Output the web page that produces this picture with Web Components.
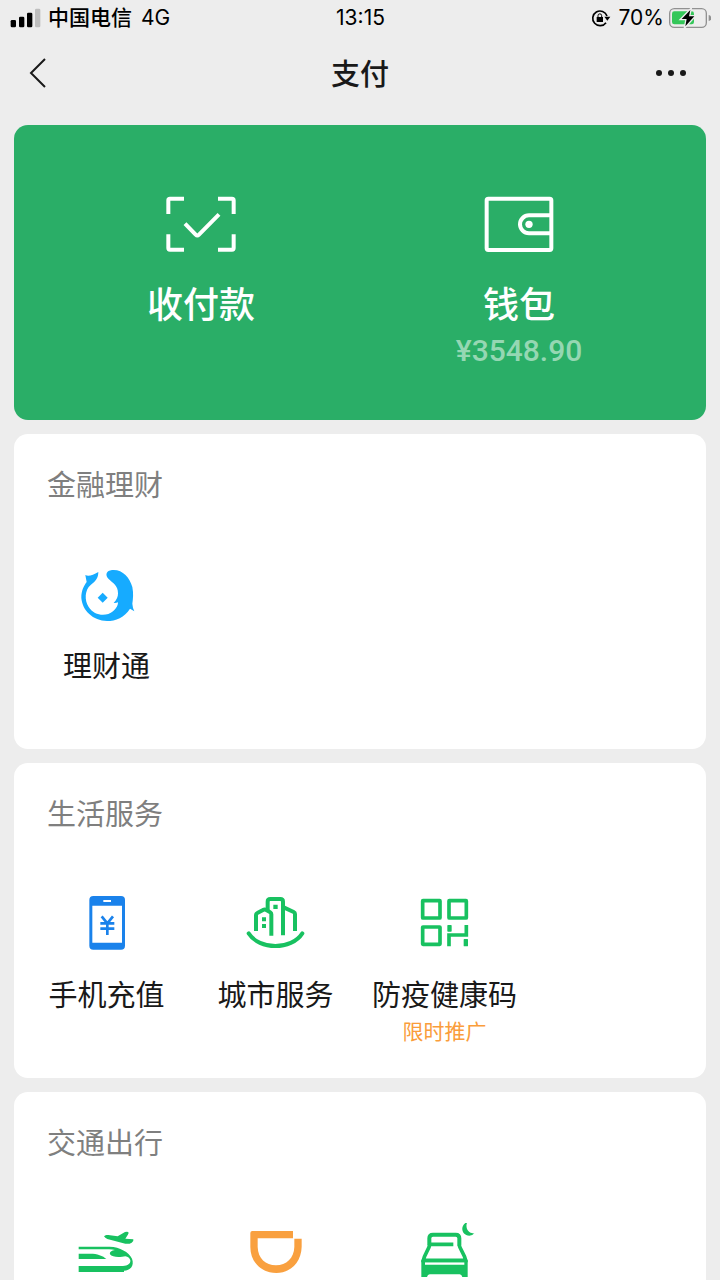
<!DOCTYPE html>
<html lang="zh-CN">
<head>
<meta charset="utf-8">
<meta name="viewport" content="width=device-width, initial-scale=1">
<title>支付</title>
<style>
  html, body { margin: 0; height: 100%; }
  body {
    background: #ededed;
    color: #191919;
    font-family: Inter, "Noto Sans CJK SC", sans-serif;
  }
</style>
</head>
<body>
<pay-page></pay-page>

<script>
const ICONS = {
  scan: `<svg viewBox="105 42 216 180" fill="none" stroke="#fff" stroke-width="12">
    <path d="M115 102V61q0-5 5-5H162M264 56h42q5 0 5 5v41M311 163v41q0 5-5 5H264M162 209H120q-5 0-5-5V163"/>
    <path d="M165 131l32 33q5 5 10 0L267 103" stroke-width="12"/></svg>`,
  wallet: `<svg viewBox="129 42 216 180" fill="none" stroke="#fff" stroke-width="12">
    <rect x="140" y="56" width="194" height="154" rx="5"/>
    <path d="M334 106H267a27 27 0 0 0 0 54H334" stroke-width="12"/>
    <circle cx="267" cy="133" r="11" fill="#fff" stroke="none"/></svg>`,
  fund: `<svg viewBox="110 45 180 180" fill="#16abff">
    <path d="M135 75C144 81 158 75 174 66C174 84 166 93 151 105C133 120 132 151 145 171C162 198 198 201 218 184C230 174 233 164 233 157Q227 160 220 159C230 149 233 140 233 130C233 106 218 100 205 87C193 75 198 62 215 60C245 57 268 81 276 111C280 130 278 148 276 161Q277 174 282 184L269 176C253 202 226 213 200 213C158 212 126 182 123 144C123 122 130 108 139 96Q137 86 135 75Z"/>
    <path d="M187 128l15 15-15 15-15-15z"/></svg>`,
  phone: `<svg viewBox="20 42 180 180">
    <rect x="57" y="48" width="107" height="161" rx="12" fill="#1a82eb"/>
    <path fill="#fff" d="M66 77h89v111H66zM99 60h23v6H99z"/>
    <path d="M94 109l17 21 17-21M90 130h42M90 146h42M111 130v35" fill="none" stroke="#1a82eb" stroke-width="8"/></svg>`,
  city: `<svg viewBox="33 42 180 180" fill="none" stroke="#18c160" stroke-width="12">
    <path d="M63 153V105q0-4 4-6l17-9q5-3 10 0l12 7q3 2 3 6V167"/>
    <path d="M98 91V65q0-8 8-8h30q8 0 8 8V166M146 82l30 14q4 2 4 6V153"/>
    <path d="M41 160C73 211 169 211 202 160" stroke-linecap="round"/>
    <path d="M115 74h13v13h-13zM81 112h12v12H81zM81 132h12v12H81z" fill="#18c160" stroke="none"/></svg>`,
  qr: `<svg viewBox="45 42 180 180" fill="none" stroke="#18c160" stroke-width="11">
    <rect x="68" y="62" width="52" height="52" rx="1"/><rect x="147" y="62" width="52" height="52" rx="1"/>
    <rect x="68" y="141" width="52" height="52" rx="1"/>
    <path d="M199 135v30H147v34"/>
    <path d="M142 137q0-2 2-2h9q2 0 2 2v16q0 2-2 2h-9q-2 0-2-2zM191 179q0-2 2-2h9q2 0 2 2v18q0 2-2 2h-9q-2 0-2-2z" fill="#18c160" stroke="none"/></svg>`,
  travel: `<svg viewBox="52 39 180 180" fill="#18c160">
    <path d="M57 110H150C181 111 207 126 217 146C225 168 211 181 193 182V186H57V168H190C204 167 213 162 212 151C210 144 205 140 197 139C182 142 157 143 151 133C149 126 156 121 166 120Q158 118 148 118H57Z"/>
    <path d="M57 131H92C112 131 130 137 140 147H57Z"/>
    <path d="M133 79C138 74 145 74 151 76L174 79L196 66Q206 63 207 69Q205 75 197 86L221 88Q223 94 216 98Q208 103 197 101L143 87Q136 84 133 79Z"/></svg>`,
  ride: `<svg viewBox="33 39 180 180" fill="#f9a03f">
    <path d="M52 63H174V85H68V111C69 145 92 166 123 166C154 166 177 144 178 111V86H200V110C199 155 168 189 124 189C79 189 46 156 46 111V69Q46 63 52 63Z"/></svg>`,
  hotel: `<svg viewBox="30 39 180 180" fill="none" stroke="#18c160" stroke-width="12">
    <path d="M73 106V85q0-11 11-11h68q11 0 11 11v21"/>
    <path d="M73 103H145M75 102C71 121 58 133 55 151H182C179 133 166 121 162 104" stroke-width="11"/>
    <path d="M49 149H188V201H172Q170 193 164 193H74Q68 193 66 201H49ZM60 157V164H178V157Z" fill="#18c160" fill-rule="evenodd" stroke="none"/>
    <path d="M187 36C164 44 168 77 193 77Q203 77 208 70C190 72 179 53 187 36Z" fill="#18c160" stroke="none"/></svg>`
};

const define = (name, markup, fill) => {
  const template = document.createElement('template');
  template.innerHTML = markup;
  customElements.define(name, class extends HTMLElement {
    connectedCallback() {
      if (this.shadowRoot) return;
      const root = this.attachShadow({ mode: 'open' });
      root.append(template.content.cloneNode(true));
      if (fill) fill(this, root);
    }
  });
};

define('status-bar', `
  <style>
    :host { display: grid; grid-template-columns: 1fr auto 1fr; align-items: center; height: 35px;
      padding: 0 9px 0 10px; color: #000; font-size: 21px; line-height: 28px; font-weight: 500; }
    svg { display: block; flex: none; }
    .left, .right { display: flex; align-items: center; }
    .left { gap: 6px; }
    .net { margin-left: 3px; font-weight: 400; }
    .right { justify-content: flex-end; gap: 5px; font-weight: 400; }
    time { font-weight: 400; }
    .lock { margin-right: 3px; }
  </style>
  <div class="left">
    <svg width="32" height="20" viewBox="30 21 96 60" role="img" aria-label="信号">
      <rect x="32" y="57" width="16" height="22" rx="4"/><rect x="57" y="47" width="16" height="32" rx="4"/>
      <rect x="81" y="35" width="16" height="44" rx="4"/><rect x="105" y="23" width="16" height="56" rx="4" fill="#bebebe"/>
    </svg>
    <span>中国电信</span><span class="net">4G</span>
  </div>
  <time>13:15</time>
  <div class="right">
    <svg class="lock" width="20" height="20" viewBox="102 21 60 60" role="img" aria-label="方向锁定">
      <path d="M147 65A22 22 0 1 1 150 45" fill="none" stroke="#000" stroke-width="5"/>
      <path d="M142 47h18l-9 12zM119 48h19v15h-19z"/>
      <path d="M123 49v-5a5 5 0 0 1 11 0v5" fill="none" stroke="#000" stroke-width="3"/>
    </svg>
    <span>70%</span>
    <svg width="42" height="20" viewBox="327 21 126 60" role="img" aria-label="正在充电">
      <rect x="329" y="23" width="110" height="56" rx="14" fill="none" stroke="#919191" stroke-width="4"/>
      <path d="M446 42q8 2 8 9t-8 9z" fill="#919191"/>
      <rect x="336" y="31" width="66" height="39" rx="7" fill="#34c759"/>
      <path d="M391 27L365 54H380L376 76L403 46H387Z" stroke="#ededed" stroke-width="8" paint-order="stroke"/>
    </svg>
  </div>`);

define('nav-bar', `
  <style>
    :host { display: grid; grid-template-columns: 1fr auto 1fr; align-items: center; height: 76px; padding: 0 24px; }
    h1 { margin: 0; padding-top: 3px; font-size: 29px; line-height: 40px; font-weight: 500; }
    button { display: flex; padding: 6px 0; border: 0; background: none; color: inherit; }
    .more { justify-self: end; }
  </style>
  <button type="button" aria-label="返回">
    <svg width="28" height="32" viewBox="0 0 28 32" fill="none" stroke="#191919" stroke-width="2"><path d="M21 2L7 16L21 30"/></svg>
  </button>
  <h1><slot></slot></h1>
  <button class="more" type="button" aria-label="更多">
    <svg width="48" height="32" viewBox="0 0 48 32" fill="#191919"><circle cx="11" cy="16" r="3"/><circle cx="23" cy="16" r="3"/><circle cx="35" cy="16" r="3"/></svg>
  </button>`);

define('wallet-card', `
  <style>
    :host { display: grid; grid-template-columns: 1fr 1fr; padding: 69px 28px 53px; border-radius: 14px; background: #2aae67; }
  </style>
  <slot></slot>`);

define('wallet-action', `
  <style>
    :host { display: block; }
    button { display: flex; flex-direction: column; align-items: center; width: 100%; padding: 0; border: 0;
      background: none; color: #fff; font: inherit; font-size: 36px; line-height: 48px; font-weight: 500; }
    svg { display: block; width: 72px; height: 60px; }
    .label { margin-top: 27px; }
    ::slotted([slot="amount"]) { color: #95d7b3; font-family: Roboto, sans-serif; font-size: 30px; line-height: 32px; }
    .amount { display: flex; justify-content: center; margin-top: 6px; height: 32px; }
  </style>
  <button type="button"><span class="icon"></span><span class="label"><slot></slot></span><span class="amount"><slot name="amount"></slot></span></button>`,
  (host, root) => { root.querySelector('.icon').innerHTML = ICONS[host.getAttribute('icon')]; });

define('service-section', `
  <style>
    :host { display: block; flex: none; padding: 32px 8px 30px; border-radius: 14px; background: #fff; box-sizing: border-box; }
    h2 { margin: 0 25px 59px; color: #7f7f7f; font-size: 29px; line-height: 40px; font-weight: 400; }
    .items { display: grid; grid-template-columns: repeat(4, 1fr); }
  </style>
  <h2></h2>
  <div class="items"><slot></slot></div>`,
  (host, root) => { root.querySelector('h2').textContent = host.getAttribute('heading'); });

define('service-item', `
  <style>
    :host { display: block; }
    button { display: flex; flex-direction: column; align-items: center; width: 100%; padding: 0; border: 0;
      background: none; color: #191919; font: inherit; font-size: 29px; line-height: 40px; white-space: nowrap; }
    svg { display: block; width: 60px; height: 60px; }
    .label { margin-top: 22px; min-height: 40px; }
    .note { height: 32px; color: #fa9d3b; font-size: 21px; line-height: 32px; }
  </style>
  <button type="button"><span class="icon"></span><span class="label"><slot></slot></span><span class="note"><slot name="note"></slot></span></button>`,
  (host, root) => {
    root.querySelector('.icon').innerHTML = ICONS[host.getAttribute('icon')];
    if (host.hasAttribute('label')) root.querySelector('button').setAttribute('aria-label', host.getAttribute('label'));
  });

define('pay-page', `
  <style>
    :host { display: flex; flex-direction: column; height: 100vh; overflow: hidden; }
    status-bar, nav-bar { flex: none; }
    main { display: flex; flex-direction: column; gap: 14px; flex: 1; min-height: 0; padding: 14px 14px 0; overflow: hidden; }
    wallet-card { flex: none; }
  </style>
  <status-bar></status-bar>
  <nav-bar>支付</nav-bar>
  <main>
    <wallet-card>
      <wallet-action icon="scan">收付款</wallet-action>
      <wallet-action icon="wallet">钱包<span slot="amount">¥3548.90</span></wallet-action>
    </wallet-card>
    <service-section heading="金融理财">
      <service-item icon="fund">理财通</service-item>
    </service-section>
    <service-section heading="生活服务">
      <service-item icon="phone">手机充值</service-item>
      <service-item icon="city">城市服务</service-item>
      <service-item icon="qr">防疫健康码<span slot="note">限时推广</span></service-item>
    </service-section>
    <service-section heading="交通出行">
      <service-item icon="travel" label="火车票机票"></service-item>
      <service-item icon="ride" label="打车"></service-item>
      <service-item icon="hotel" label="酒店"></service-item>
    </service-section>
  </main>`);
</script>
</body>
</html>
